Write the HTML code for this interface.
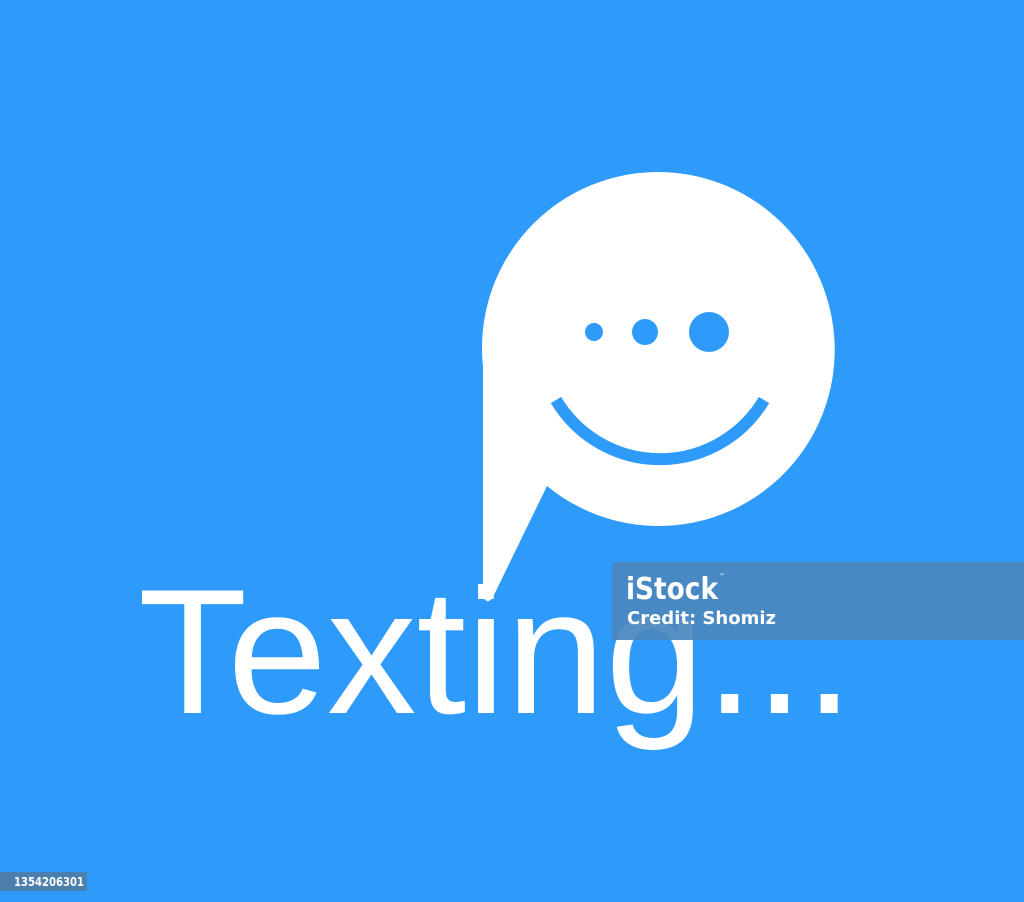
<!DOCTYPE html>
<html><head><meta charset="utf-8"><style>
html,body{margin:0;padding:0;width:1024px;height:902px;overflow:hidden;background:#2E9BFA}
svg{display:block}
</style></head><body>
<svg width="1024" height="902" viewBox="0 0 1024 902" xmlns="http://www.w3.org/2000/svg">
<rect width="1024" height="902" fill="#2E9BFA"/>
<path d="M483 340 A176 176 0 1 1 547 486 L493 597 Q487 606 483 596 Z" fill="#fff"/>
<circle cx="658" cy="348" r="176" fill="#fff"/>
<circle cx="594" cy="332" r="9" fill="#2E9BFA"/>
<circle cx="645" cy="332" r="13" fill="#2E9BFA"/>
<circle cx="709" cy="332" r="20" fill="#2E9BFA"/>
<path d="M556 400 A121 121 0 0 0 764 400" fill="none" stroke="#2E9BFA" stroke-width="12"/>
<text x="138" y="713" font-family="Liberation Sans, DejaVu Sans, sans-serif" font-size="178" fill="#fff" textLength="716" lengthAdjust="spacingAndGlyphs">Texting...</text>
<rect x="612" y="562" width="412" height="78" fill="#4A88BE" opacity="0.93"/>
<text x="626" y="599" font-family="DejaVu Sans, sans-serif" font-weight="bold" font-size="30" fill="#fff" textLength="92" lengthAdjust="spacingAndGlyphs">iStock</text>
<text x="719" y="578" font-family="DejaVu Sans, sans-serif" font-size="6" fill="#fff">™</text>
<text x="627" y="624" font-family="DejaVu Sans, sans-serif" font-weight="bold" font-size="18" fill="#fff" textLength="149" lengthAdjust="spacingAndGlyphs">Credit: Shomiz</text>
<rect x="0" y="872" width="87" height="19" fill="#4A7FAE"/>
<text x="14" y="886" font-family="DejaVu Sans, sans-serif" font-weight="bold" font-size="12" fill="#fff" textLength="70" lengthAdjust="spacingAndGlyphs">1354206301</text>
</svg>
</body></html>
